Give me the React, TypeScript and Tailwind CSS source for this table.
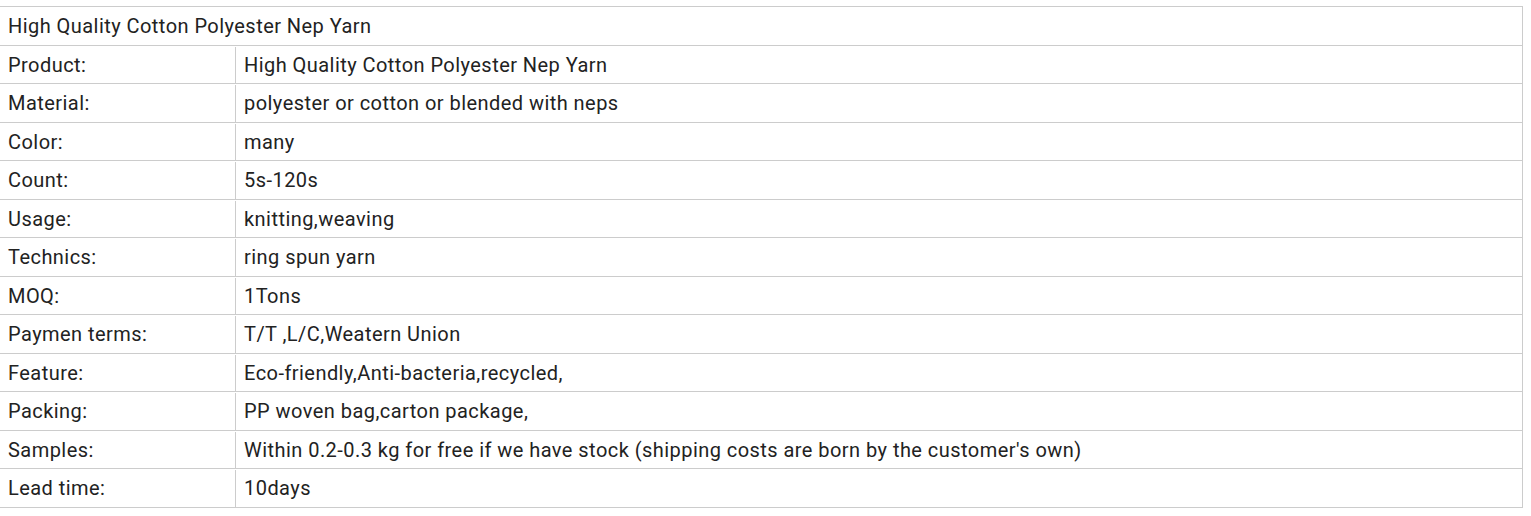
const rows: [string, string][] = [
  ["Product:", "High Quality Cotton Polyester Nep Yarn"],
  ["Material:", "polyester or cotton or blended with neps"],
  ["Color:", "many"],
  ["Count:", "5s-120s"],
  ["Usage:", "knitting,weaving"],
  ["Technics:", "ring spun yarn"],
  ["MOQ:", "1Tons"],
  ["Paymen terms:", "T/T ,L/C,Weatern Union"],
  ["Feature:", "Eco-friendly,Anti-bacteria,recycled,"],
  ["Packing:", "PP woven bag,carton package,"],
  [
    "Samples:",
    "Within 0.2-0.3 kg for free if we have stock (shipping costs are born by the customer's own)",
  ],
  ["Lead time:", "10days"],
];

export default function App() {
  return (
    <div className="min-h-screen bg-white font-['Roboto',sans-serif] text-[20px] tracking-[0.45px] text-[#222]">
      <div className="pt-[6px]">
        <div className="flex w-[1523px] flex-col border-t border-r border-[#cccccc]">
          <div className="flex h-[38.5px] items-center border-b border-[#cccccc] px-2 pt-px">
            High Quality Cotton Polyester Nep Yarn
          </div>
          {rows.map(([label, value]) => (
            <div
              key={label}
              className="flex h-[38.5px] border-b border-[#cccccc] pt-px"
            >
              <div className="flex w-[236px] shrink-0 items-center border-r border-[#cccccc] px-2">
                {label}
              </div>
              <div className="flex items-center px-2">{value}</div>
            </div>
          ))}
        </div>
      </div>
    </div>
  );
}
